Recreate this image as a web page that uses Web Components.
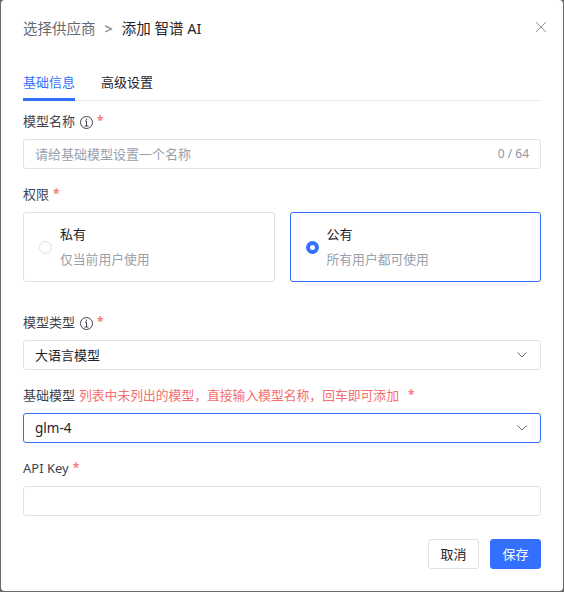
<!DOCTYPE html>
<html lang="zh">
<head>
<meta charset="utf-8">
<title>添加 智谱 AI</title>
<style>
    html, body { margin: 0; height: 100%; }
    body {
        background: #6b6b6b;
        font-family: "Noto Sans", "Noto Sans CJK SC", sans-serif;
        line-height: 20px;
    }
</style>
</head>
<body>
<model-dialog>
    <span slot="provider">选择供应商</span>
    <span slot="title">添加 智谱 AI</span>
    <form-field label="模型名称" info required>
        <text-box placeholder="请给基础模型设置一个名称" counter="0 / 64"></text-box>
    </form-field>
    <form-field label="权限" required top="15">
        <div style="display:grid;grid-template-columns:1fr 1fr;gap:15px">
            <radio-card title="私有" desc="仅当前用户使用"></radio-card>
            <radio-card title="公有" desc="所有用户都可使用" checked></radio-card>
        </div>
    </form-field>
    <form-field label="模型类型" info required top="30">
        <select-box value="大语言模型"></select-box>
    </form-field>
    <form-field label="基础模型" hint="列表中未列出的模型，直接输入模型名称，回车即可添加" required top="15">
        <select-box value="glm-4" focused style="font-size:13.5px"></select-box>
    </form-field>
    <form-field label="API Key" required top="15">
        <text-box></text-box>
    </form-field>
</model-dialog>

<script>
class FormField extends HTMLElement {
    constructor() {
        super();
        this.attachShadow({ mode: 'open' });
        const info = this.hasAttribute('info') ? `
            <svg class="info" width="13" height="13" viewBox="0 0 13 13" fill="none" stroke="#3d4350">
                <circle cx="6.5" cy="6.5" r="6"/>
                <path d="M5 5h1.500v5M4.500 10h4"/>
                <path d="M6.500 2.500v1.500"/>
            </svg>` : '';
        const hint = this.getAttribute('hint');
        this.shadowRoot.innerHTML = `
            <style>
                :host {
                    display: block;
                    margin-top: ${this.getAttribute('top') || 0}px;
                }

                .label {
                    display: flex;
                    align-items: center;
                    height: 20px;
                    font-size: 13px;
                    color: #3d4350;
                    margin-bottom: 8px;
                }

                .info { margin-left: 5px; margin-top: 2px; }

                .hint {
                    color: #f76e6e;
                    font-size: 12.800px;
                    margin-left: 4px;
                }

                .star {
                    color: #f77c7c;
                    margin-left: ${hint ? 9 : 4}px;
                    margin-bottom: 1px;
                    font-size: 12px;
                    font-weight: 700;
                }
            </style>
            <div class="label">
                <span>${this.getAttribute('label')}</span>
                ${info}
                ${hint ? `<span class="hint">${hint}</span>` : ''}
                <span class="star">*</span>
            </div>
            <slot></slot>
        `;
    }
}

customElements.define('form-field', FormField);


class TextBox extends HTMLElement {
    constructor() {
        super();
        this.attachShadow({ mode: 'open' });
        this.shadowRoot.innerHTML = `
            <style>
                :host {
                    display: flex;
                    align-items: center;
                    justify-content: space-between;
                    box-sizing: border-box;
                    height: 30px;
                    padding: 0 11px;
                    border: 1px solid #e0e1e4;
                    border-radius: 3px;
                    font-size: 13px;
                }

                .placeholder { color: #98a0ac; }
                .counter { color: #8f959e; font-size: 12px; }
            </style>
            <span class="placeholder">${this.getAttribute('placeholder') || ''}</span>
            <span class="counter">${this.getAttribute('counter') || ''}</span>
        `;
    }
}

customElements.define('text-box', TextBox);


class SelectBox extends HTMLElement {
    constructor() {
        super();
        this.attachShadow({ mode: 'open' });
        this.shadowRoot.innerHTML = `
            <style>
                :host {
                    display: flex;
                    align-items: center;
                    justify-content: space-between;
                    box-sizing: border-box;
                    height: 30px;
                    padding: 0 12px 0 11px;
                    border: 1px solid #e0e1e4;
                    border-radius: 3px;
                    font-size: 13px;
                    color: #1f2329;
                }

                :host([focused]) { border-color: #3370ff; }
            </style>
            <span>${this.getAttribute('value')}</span>
            <svg width="12" height="12" viewBox="0 0 12 12" fill="none" stroke="#646a73">
                <path d="M1.500 3.500l4.500 4.500 4.500-4.500"/>
            </svg>
        `;
    }
}

customElements.define('select-box', SelectBox);


class RadioCard extends HTMLElement {
    constructor() {
        super();
        this.attachShadow({ mode: 'open' });
        this.shadowRoot.innerHTML = `
            <style>
                :host {
                    display: flex;
                    align-items: center;
                    gap: 8px;
                    box-sizing: border-box;
                    height: 70px;
                    padding: 0 15px;
                    border: 1px solid #e0e1e4;
                    border-radius: 3px;
                }

                :host([checked]) { border-color: #3370ff; }

                .dot {
                    box-sizing: border-box;
                    width: 13px;
                    height: 13px;
                    border: 1px solid #e0e1e4;
                    border-radius: 50%;
                    flex: none;
                }

                :host([checked]) .dot { border: 4.500px solid #3370ff; }

                .text { padding-bottom: 2px; }
                .title { font-size: 13px; color: #1f2329; }
                .desc { font-size: 12.800px; color: #9aa0a9; margin-top: 5px; }
            </style>
            <span class="dot"></span>
            <div class="text">
                <div class="title">${this.getAttribute('title')}</div>
                <div class="desc">${this.getAttribute('desc')}</div>
            </div>
        `;
    }
}

customElements.define('radio-card', RadioCard);


class ModelDialog extends HTMLElement {
    constructor() {
        super();
        this.attachShadow({ mode: 'open' });
        this.shadowRoot.innerHTML = `
            <style>
                :host {
                    display: flex;
                    flex-direction: column;
                    box-sizing: border-box;
                    height: 591px;
                    margin-left: 1px;
                    margin-right: 1px;
                    padding: 18px 22px 22px;
                    background: #fff;
                    border-radius: 4px;
                }

                header {
                    display: flex;
                    align-items: center;
                    height: 20px;
                    font-size: 14.500px;
                    color: #1f2329;
                }

                .provider { color: #646a73; }
                .sep { color: #8f959e; margin: 0 9px; font-weight: 700; }

                .close {
                    margin-left: auto;
                    margin-right: -5px;
                    margin-top: -2px;
                }

                nav {
                    display: flex;
                    gap: 26px;
                    margin-top: 23px;
                    margin-bottom: 10px;
                    height: 40px;
                    box-sizing: border-box;
                    border-bottom: 1px solid #e4e6ec;
                    font-size: 13px;
                    color: #1f2329;
                }

                nav span { padding-top: 11px; box-sizing: border-box; height: 40px; }
                nav .active { color: #3370ff; border-bottom: 3px solid #3370ff; }

                footer {
                    display: flex;
                    justify-content: flex-end;
                    gap: 11px;
                    margin-top: auto;
                }

                button {
                    all: unset;
                    box-sizing: border-box;
                    width: 51px;
                    height: 30px;
                    text-align: center;
                    font-size: 13px;
                    line-height: 26px;
                    border: 1px solid #e0e1e4;
                    border-radius: 3px;
                    color: #1f2329;
                }

                button.primary {
                    background: #3370ff;
                    border-color: #3370ff;
                    color: #fff;
                }
            </style>
            <header>
                <span class="provider"><slot name="provider"></slot></span>
                <span class="sep">&gt;</span>
                <span><slot name="title"></slot></span>
                <svg class="close" width="10" height="10" viewBox="0 0 10 10" stroke="#8f959e" fill="none">
                    <path d="M0 0l10 10M10 0L0 10"/>
                </svg>
            </header>
            <nav>
                <span class="active">基础信息</span>
                <span>高级设置</span>
            </nav>
            <div class="body"><slot></slot></div>
            <footer>
                <button>取消</button>
                <button class="primary">保存</button>
            </footer>
        `;
    }
}

customElements.define('model-dialog', ModelDialog);
</script>
</body>
</html>
